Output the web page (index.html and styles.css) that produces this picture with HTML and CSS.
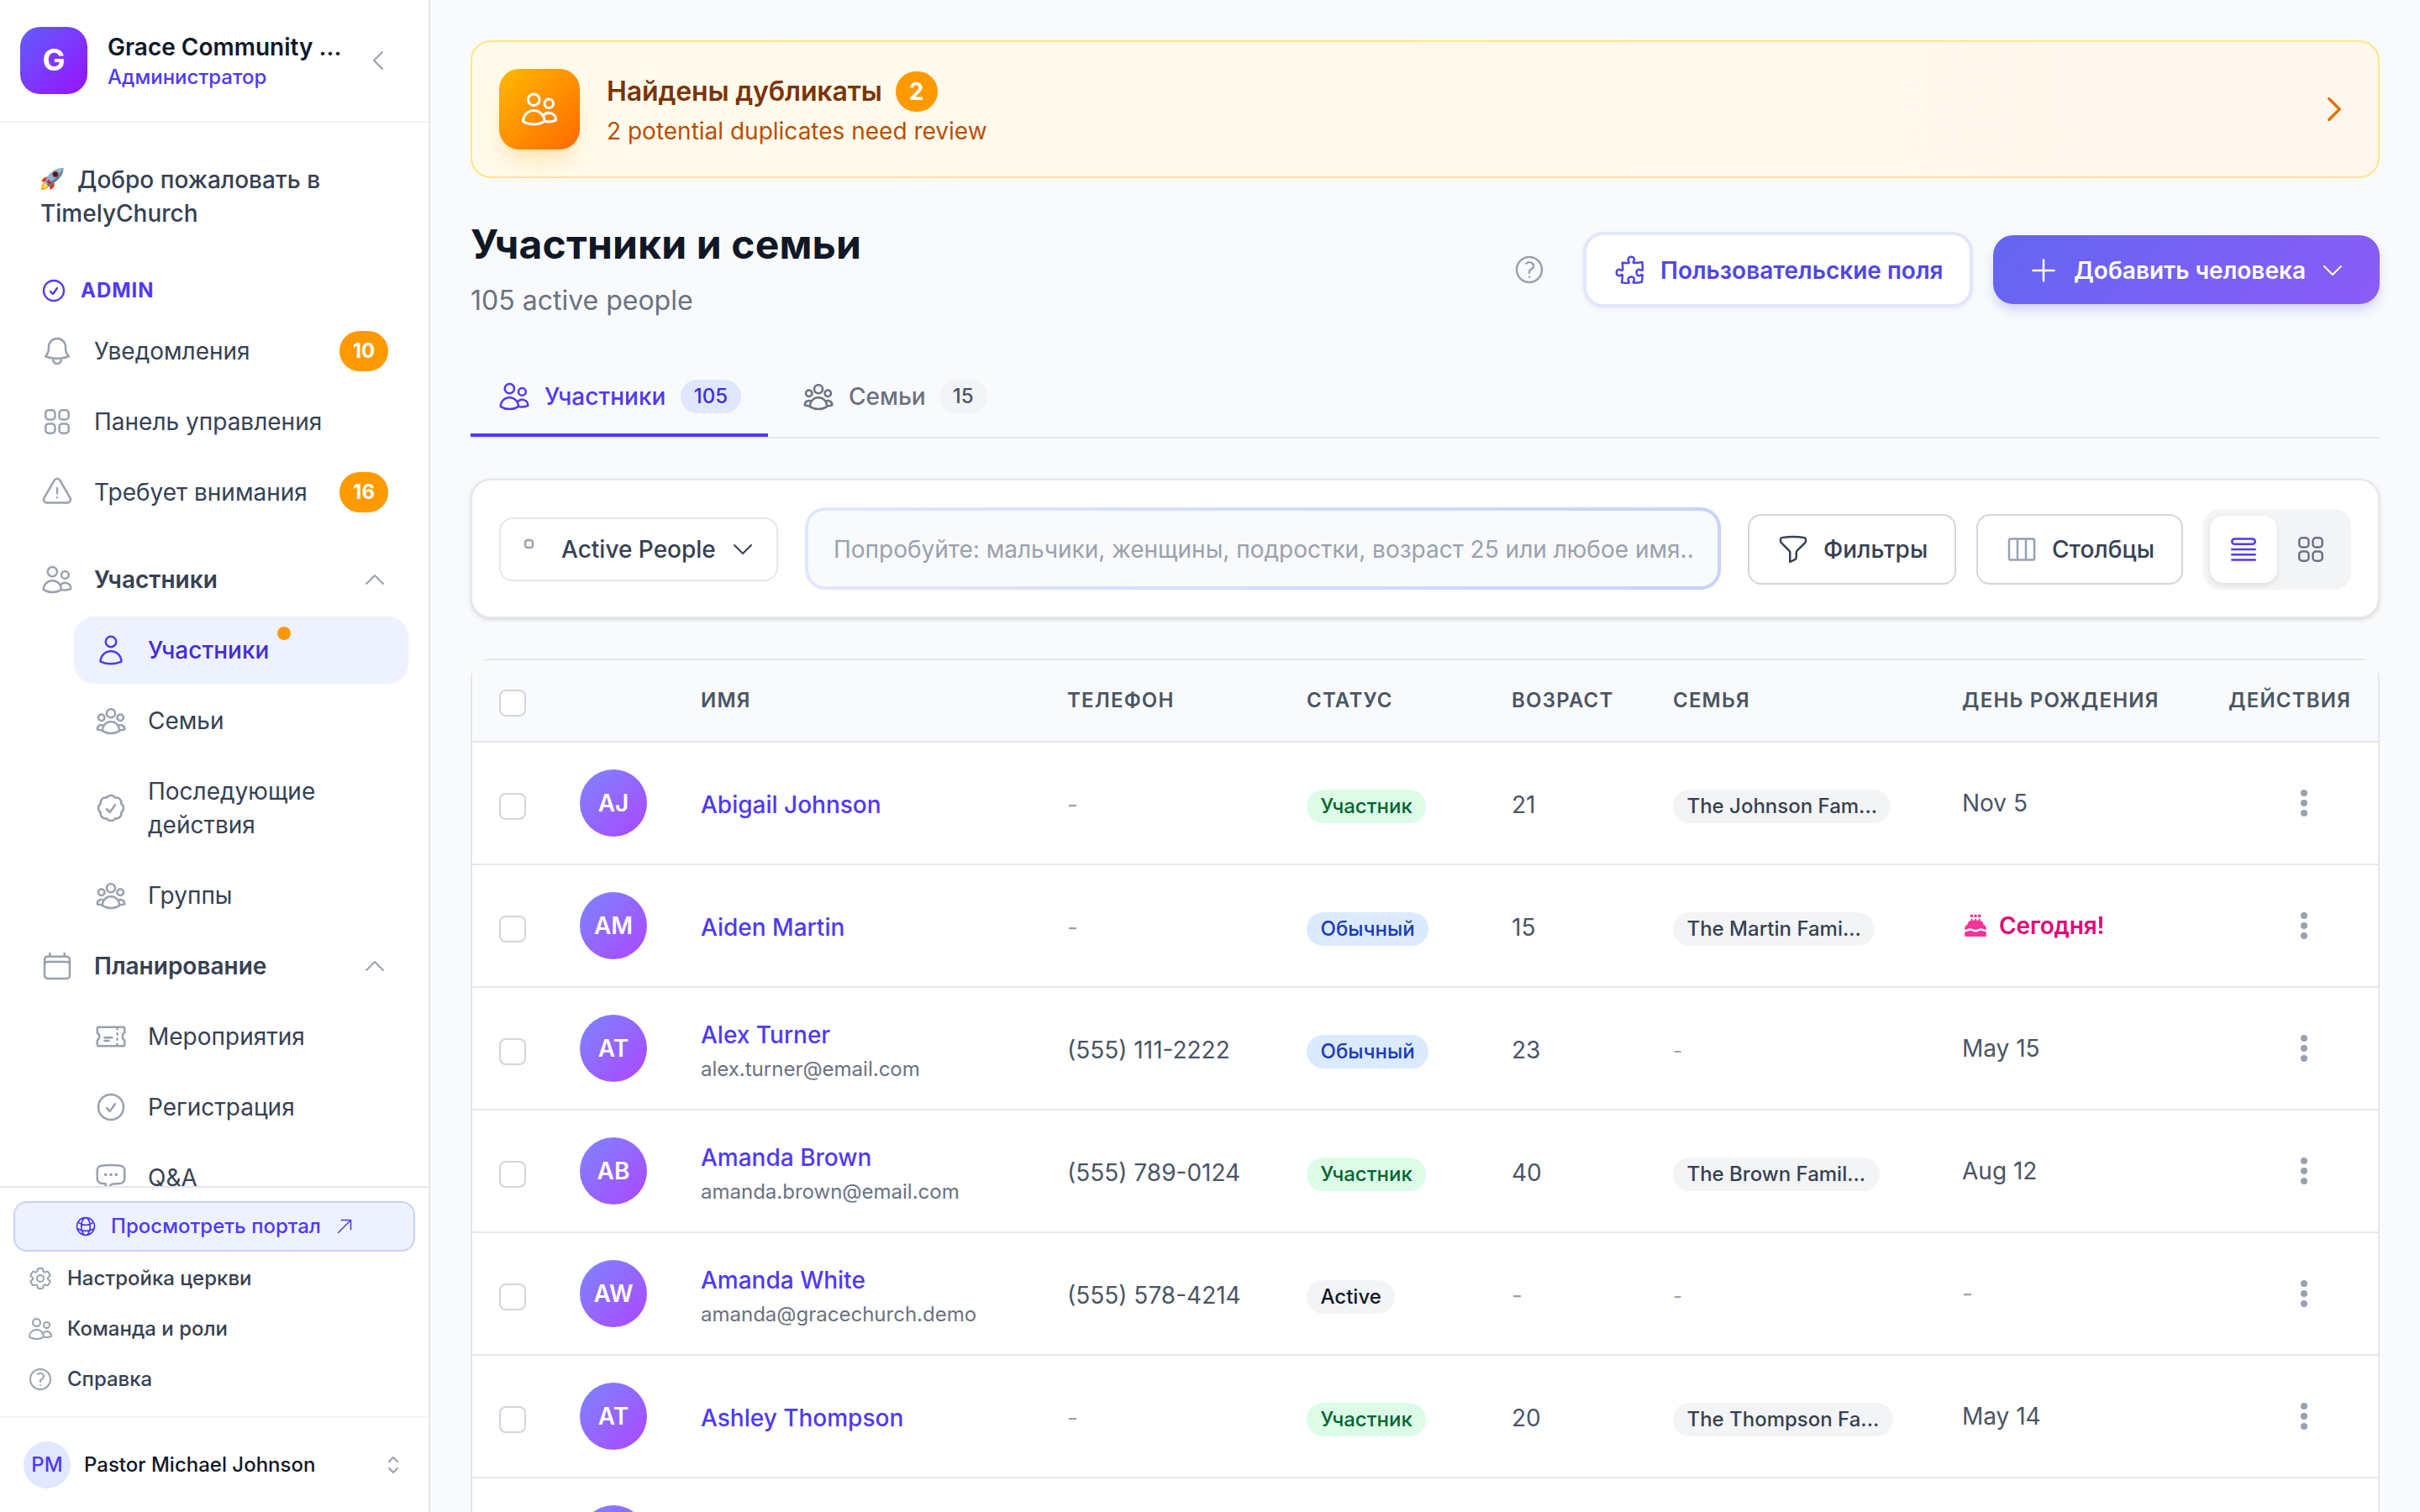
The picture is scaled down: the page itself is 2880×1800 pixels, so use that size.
FILE: index.html
```html
<!DOCTYPE html>
<html lang="ru">
<head>
    <meta charset="UTF-8">
    <meta name="viewport" content="width=device-width, initial-scale=1.0">
    <title>Участники и семьи</title>
    <link rel="stylesheet" href="styles.css">
</head>
<body>

<!-- Иконки -->
<svg class="sprite" xmlns="http://www.w3.org/2000/svg">
    <symbol id="users" viewBox="0 0 24 24"><path d="M15 19.128a9.38 9.38 0 0 0 2.625.372 9.337 9.337 0 0 0 4.121-.952 4.125 4.125 0 0 0-7.533-2.493M15 19.128v-.003c0-1.113-.285-2.16-.786-3.07M15 19.128v.106A12.318 12.318 0 0 1 8.624 21c-2.331 0-4.512-.645-6.374-1.766l-.001-.109a6.375 6.375 0 0 1 11.964-3.07M12 6.375a3.375 3.375 0 1 1-6.75 0 3.375 3.375 0 0 1 6.75 0Zm8.25 2.25a2.625 2.625 0 1 1-5.25 0 2.625 2.625 0 0 1 5.25 0Z"/></symbol>
    <symbol id="group" viewBox="0 0 24 24"><path d="M18 18.72a9.094 9.094 0 0 0 3.741-.479 3 3 0 0 0-4.682-2.72m.94 3.198.001.031c0 .225-.012.447-.037.666A11.944 11.944 0 0 1 12 21c-2.17 0-4.207-.576-5.963-1.584A6.062 6.062 0 0 1 6 18.719m12 0a5.971 5.971 0 0 0-.941-3.197m0 0A5.995 5.995 0 0 0 12 12.75a5.995 5.995 0 0 0-5.058 2.772m0 0a3 3 0 0 0-4.681 2.72 8.986 8.986 0 0 0 3.74.477m.94-3.197a5.971 5.971 0 0 0-.94 3.197M15 6.75a3 3 0 1 1-6 0 3 3 0 0 1 6 0Zm6 3a2.25 2.25 0 1 1-4.5 0 2.25 2.25 0 0 1 4.5 0Zm-13.5 0a2.25 2.25 0 1 1-4.5 0 2.25 2.25 0 0 1 4.5 0Z"/></symbol>
    <symbol id="user" viewBox="0 0 24 24"><path d="M15.75 6a3.75 3.75 0 1 1-7.5 0 3.75 3.75 0 0 1 7.5 0ZM4.501 20.118a7.5 7.5 0 0 1 14.998 0A17.933 17.933 0 0 1 12 21.75c-2.676 0-5.216-.584-7.499-1.632Z"/></symbol>
    <symbol id="bell" viewBox="0 0 24 24"><path d="M14.857 17.082a23.848 23.848 0 0 0 5.454-1.31A8.967 8.967 0 0 1 18 9.75V9A6 6 0 0 0 6 9v.75a8.967 8.967 0 0 1-2.312 6.022c1.733.64 3.56 1.085 5.455 1.31m5.714 0a24.255 24.255 0 0 1-5.714 0m5.714 0a3 3 0 1 1-5.714 0"/></symbol>
    <symbol id="squares" viewBox="0 0 24 24"><path d="M3.75 6A2.25 2.25 0 0 1 6 3.75h2.25A2.25 2.25 0 0 1 10.5 6v2.25a2.25 2.25 0 0 1-2.25 2.25H6a2.25 2.25 0 0 1-2.25-2.25V6ZM3.75 15.75A2.25 2.25 0 0 1 6 13.5h2.25a2.25 2.25 0 0 1 2.25 2.25V18a2.25 2.25 0 0 1-2.25 2.25H6A2.25 2.25 0 0 1 3.75 18v-2.25ZM13.5 6a2.25 2.25 0 0 1 2.25-2.25H18A2.25 2.25 0 0 1 20.25 6v2.25A2.25 2.25 0 0 1 18 10.5h-2.25a2.25 2.25 0 0 1-2.25-2.25V6ZM13.5 15.75a2.25 2.25 0 0 1 2.25-2.25H18a2.25 2.25 0 0 1 2.25 2.25V18A2.25 2.25 0 0 1 18 20.25h-2.25A2.25 2.25 0 0 1 13.5 18v-2.25Z"/></symbol>
    <symbol id="square" viewBox="0 0 24 24"><path d="M3.75 6A2.25 2.25 0 0 1 6 3.75h2.25A2.25 2.25 0 0 1 10.5 6v2.25a2.25 2.25 0 0 1-2.25 2.25H6a2.25 2.25 0 0 1-2.25-2.25V6Z"/></symbol>
    <symbol id="warning" viewBox="0 0 24 24"><path d="M12 9v3.75m-9.303 3.376c-.866 1.5.217 3.374 1.948 3.374h14.71c1.73 0 2.813-1.874 1.948-3.374L13.949 3.378c-.866-1.5-3.032-1.5-3.898 0L2.697 16.126ZM12 15.75h.007v.008H12v-.008Z"/></symbol>
    <symbol id="badge-check" viewBox="0 0 24 24"><path d="M9 12.75 11.25 15 15 9.75M21 12c0 1.268-.63 2.39-1.593 3.068a3.745 3.745 0 0 1-1.043 3.296 3.745 3.745 0 0 1-3.296 1.043A3.745 3.745 0 0 1 12 21c-1.268 0-2.39-.63-3.068-1.593a3.746 3.746 0 0 1-3.296-1.043 3.745 3.745 0 0 1-1.043-3.296A3.745 3.745 0 0 1 3 12c0-1.268.63-2.39 1.593-3.068a3.745 3.745 0 0 1 1.043-3.296 3.746 3.746 0 0 1 3.296-1.043A3.746 3.746 0 0 1 12 3c1.268 0 2.39.63 3.068 1.593a3.746 3.746 0 0 1 3.296 1.043 3.746 3.746 0 0 1 1.043 3.296A3.745 3.745 0 0 1 21 12Z"/></symbol>
    <symbol id="calendar" viewBox="0 0 24 24"><path d="M6.75 3v2.25M17.25 3v2.25M3 18.75V7.5a2.25 2.25 0 0 1 2.25-2.25h13.5A2.25 2.25 0 0 1 21 7.5v11.25m-18 0A2.25 2.25 0 0 0 5.25 21h13.5A2.25 2.25 0 0 0 21 18.75m-18 0v-7.5A2.25 2.25 0 0 1 5.25 9h13.5A2.25 2.25 0 0 1 21 11.25v7.5"/></symbol>
    <symbol id="ticket" viewBox="0 0 24 24"><path d="M16.5 6v.75m0 3v.75m0 3v.75m0 3V18m-9-5.25h5.25M7.5 15h3M3.375 5.25c-.621 0-1.125.504-1.125 1.125v3.026a2.999 2.999 0 0 1 0 5.198v3.026c0 .621.504 1.125 1.125 1.125h17.25c.621 0 1.125-.504 1.125-1.125v-3.026a2.999 2.999 0 0 1 0-5.198V6.375c0-.621-.504-1.125-1.125-1.125H3.375Z"/></symbol>
    <symbol id="check" viewBox="0 0 24 24"><path d="M9 12.75 11.25 15 15 9.75M21 12a9 9 0 1 1-18 0 9 9 0 0 1 18 0Z"/></symbol>
    <symbol id="chat" viewBox="0 0 24 24"><path d="M8.625 9.75a.375.375 0 1 1-.75 0 .375.375 0 0 1 .75 0Zm0 0H8.25m4.125 0a.375.375 0 1 1-.75 0 .375.375 0 0 1 .75 0Zm0 0H12m4.125 0a.375.375 0 1 1-.75 0 .375.375 0 0 1 .75 0Zm0 0h-.375m-13.5 3.01c0 1.6 1.123 2.994 2.707 3.227 1.087.16 2.185.283 3.293.369V21l4.184-4.183a1.14 1.14 0 0 1 .778-.332 48.294 48.294 0 0 0 5.83-.498c1.585-.233 2.708-1.626 2.708-3.228V6.741c0-1.602-1.123-2.995-2.707-3.228A48.394 48.394 0 0 0 12 3c-2.392 0-4.744.175-7.043.513C3.373 3.746 2.25 5.14 2.25 6.741v6.018Z"/></symbol>
    <symbol id="globe" viewBox="0 0 24 24"><path d="M12 21a9.004 9.004 0 0 0 8.716-6.747M12 21a9.004 9.004 0 0 1-8.716-6.747M12 21c2.485 0 4.5-4.03 4.5-9S14.485 3 12 3m0 18c-2.485 0-4.5-4.03-4.5-9S9.515 3 12 3m0 0a8.997 8.997 0 0 1 7.843 4.582M12 3a8.997 8.997 0 0 0-7.843 4.582m15.686 0A11.953 11.953 0 0 1 12 10.5c-2.998 0-5.74-1.1-7.843-2.918m15.686 0A8.959 8.959 0 0 1 21 12c0 .778-.099 1.533-.284 2.253m0 0A17.919 17.919 0 0 1 12 16.5c-3.162 0-6.133-.815-8.716-2.247m0 0A9.015 9.015 0 0 1 3 12c0-1.605.42-3.113 1.157-4.418"/></symbol>
    <symbol id="arrow-out" viewBox="0 0 24 24"><path d="m4.5 19.5 15-15m0 0H8.25m11.25 0v11.25"/></symbol>
    <symbol id="cog" viewBox="0 0 24 24"><path d="M9.594 3.94c.09-.542.56-.94 1.11-.94h2.593c.55 0 1.02.398 1.11.94l.213 1.281c.063.374.313.686.645.87.074.04.147.083.22.127.325.196.72.257 1.075.124l1.217-.456a1.125 1.125 0 0 1 1.37.49l1.296 2.247a1.125 1.125 0 0 1-.26 1.431l-1.003.827c-.293.241-.438.613-.43.992a7.723 7.723 0 0 1 0 .255c-.008.378.137.75.43.991l1.004.827c.424.35.534.955.26 1.43l-1.298 2.247a1.125 1.125 0 0 1-1.369.491l-1.217-.456c-.355-.133-.75-.072-1.076.124a6.47 6.47 0 0 1-.22.128c-.331.183-.581.495-.644.869l-.213 1.281c-.09.543-.56.94-1.11.94h-2.594c-.55 0-1.019-.398-1.11-.94l-.213-1.281c-.062-.374-.312-.686-.644-.87a6.52 6.52 0 0 1-.22-.127c-.325-.196-.72-.257-1.076-.124l-1.217.456a1.125 1.125 0 0 1-1.369-.49l-1.297-2.247a1.125 1.125 0 0 1 .26-1.431l1.004-.827c.292-.24.437-.613.43-.991a6.932 6.932 0 0 1 0-.255c.007-.38-.138-.751-.43-.992l-1.004-.827a1.125 1.125 0 0 1-.26-1.43l1.297-2.247a1.125 1.125 0 0 1 1.37-.491l1.216.456c.356.133.751.072 1.076-.124.072-.044.146-.086.22-.128.332-.183.582-.495.644-.869l.214-1.28ZM15 12a3 3 0 1 1-6 0 3 3 0 0 1 6 0Z"/></symbol>
    <symbol id="question" viewBox="0 0 24 24"><path d="M9.879 7.519c1.171-1.025 3.071-1.025 4.242 0 1.172 1.025 1.172 2.687 0 3.712-.203.179-.43.326-.67.442-.745.361-1.45.999-1.45 1.827v.75M21 12a9 9 0 1 1-18 0 9 9 0 0 1 18 0Zm-9 5.25h.008v.008H12v-.008Z"/></symbol>
    <symbol id="up-down" viewBox="0 0 24 24"><path d="M8.25 15 12 18.75 15.75 15m-7.5-6L12 5.25 15.75 9"/></symbol>
    <symbol id="left" viewBox="0 0 24 24"><path d="M15.75 19.5 8.25 12l7.5-7.5"/></symbol>
    <symbol id="right" viewBox="0 0 24 24"><path d="m8.25 4.5 7.5 7.5-7.5 7.5"/></symbol>
    <symbol id="up" viewBox="0 0 24 24"><path d="m4.5 15.75 7.5-7.5 7.5 7.5"/></symbol>
    <symbol id="down" viewBox="0 0 24 24"><path d="m19.5 8.25-7.5 7.5-7.5-7.5"/></symbol>
    <symbol id="plus" viewBox="0 0 24 24"><path d="M12 4.5v15m7.5-7.5h-15"/></symbol>
    <symbol id="funnel" viewBox="0 0 24 24"><path d="M12 3c2.755 0 5.455.232 8.083.678.533.09.917.556.917 1.096v1.044a2.25 2.25 0 0 1-.659 1.591l-5.432 5.432a2.25 2.25 0 0 0-.659 1.591v2.927a2.25 2.25 0 0 1-1.244 2.013L9.75 21v-6.568a2.25 2.25 0 0 0-.659-1.591L3.659 7.409A2.25 2.25 0 0 1 3 5.818V4.774c0-.54.384-1.006.917-1.096A48.32 48.32 0 0 1 12 3Z"/></symbol>
    <symbol id="columns" viewBox="0 0 24 24"><path d="M9 4.5v15m6-15v15m-10.875 0h15.75c.621 0 1.125-.504 1.125-1.125V5.625c0-.621-.504-1.125-1.125-1.125H4.125C3.504 4.5 3 5.004 3 5.625v12.75c0 .621.504 1.125 1.125 1.125Z"/></symbol>
    <symbol id="list" viewBox="0 0 24 24"><path d="M3.75 12h16.5m-16.5 3.75h16.5M3.75 19.5h16.5M5.625 4.5h12.75a1.875 1.875 0 0 1 0 3.75H5.625a1.875 1.875 0 0 1 0-3.75Z"/></symbol>
    <symbol id="puzzle" viewBox="0 0 24 24"><path d="M14.25 6.087c0-.355.186-.676.401-.959.221-.29.349-.634.349-1.003 0-1.036-1.007-1.875-2.25-1.875s-2.25.84-2.25 1.875c0 .369.128.713.349 1.003.215.283.401.604.401.959v0a.64.64 0 0 1-.657.643 48.39 48.39 0 0 1-4.163-.3c.186 1.613.293 3.25.315 4.907a.656.656 0 0 1-.658.663v0c-.355 0-.676-.186-.959-.401a1.647 1.647 0 0 0-1.003-.349c-1.036 0-1.875 1.007-1.875 2.25s.84 2.25 1.875 2.25c.369 0 .713-.128 1.003-.349.283-.215.604-.401.959-.401v0c.31 0 .555.26.532.57a48.039 48.039 0 0 1-.642 5.056c1.518.19 3.058.309 4.616.354a.64.64 0 0 0 .657-.643v0c0-.355-.186-.676-.401-.959a1.647 1.647 0 0 1-.349-1.003c0-1.035 1.008-1.875 2.25-1.875 1.243 0 2.25.84 2.25 1.875 0 .369-.128.713-.349 1.003-.215.283-.4.604-.4.959v0c0 .333.277.599.61.58a48.1 48.1 0 0 0 5.427-.63 48.05 48.05 0 0 0 .582-4.717.532.532 0 0 0-.533-.57v0c-.355 0-.676.186-.959.401-.29.221-.634.349-1.003.349-1.035 0-1.875-1.007-1.875-2.25s.84-2.25 1.875-2.25c.37 0 .713.128 1.003.349.283.215.604.401.96.401v0a.656.656 0 0 0 .658-.663 48.422 48.422 0 0 0-.37-5.36c-1.886.342-3.81.574-5.766.689a.578.578 0 0 1-.61-.58v0Z"/></symbol>
    <symbol id="dots" viewBox="0 0 20 20"><circle cx="10" cy="4" r="2"/><circle cx="10" cy="10" r="2"/><circle cx="10" cy="16" r="2"/></symbol>
    <symbol id="cake" viewBox="0 0 20 20">
        <circle cx="7.1" cy="2.7" r="1.15"/><circle cx="10" cy="2.7" r="1.15"/><circle cx="12.9" cy="2.7" r="1.15"/>
        <path d="M6.5 5h1.3v1.1h1.5V5h1.4v1.1h1.5V5h1.3v1.2c1.5.3 2.3 1.4 2.3 2.6v.2c1.3.4 2.2 1.6 2.2 3v1c-.7 0-1.200-.1-1.700-.4a5.200 5.200 0 0 0-4.600 0 3.700 3.700 0 0 1-3.400 0 5.200 5.200 0 0 0-4.600 0c-.5.3-1 .4-1.700.4v-1c0-1.400.9-2.600 2.200-3v-.2c0-1.200.8-2.300 2.300-2.600z"/>
        <path d="M2 14.600c.8 0 1.600-.2 2.300-.5a3.700 3.700 0 0 1 3.400 0 5.200 5.200 0 0 0 4.600 0 3.700 3.700 0 0 1 3.400 0c.7.3 1.500.5 2.300.5v2.700a.8.8 0 0 1-.8.8H2.800a.8.8 0 0 1-.8-.8z"/>
    </symbol>
    <symbol id="rocket" viewBox="0 0 28 28">
        <path fill="#e0321f" d="M9 11 4 13 1 17l7 1zM17 19l-1 5-4 3-2-7z"/>
        <path fill="#fba81c" d="M6 17c-3 1-5 4-5 10 5 0 8-2 10-5z"/>
        <path fill="#ffe36b" d="M6 19c-2 1-3 3-3 6 3 0 5-1 6-3z"/>
        <path fill="#8fb4cc" d="M27.500.8C20 .8 13 4.500 8 12l-3 6 5 5 6-4c8-5 11.500-11 11.500-18.200z"/>
        <path fill="#5b7f9b" d="M27.500.8C27 8 23 14 15 19.500L10 23l-2.500-2.500C16 16 23 10 27.500.8z"/>
        <path fill="#c4262e" d="M9.500 14.500l4 4-3 2-3-3z"/>
        <circle cx="18" cy="8.500" r="3.600" fill="#b3202a"/><circle cx="18" cy="8.500" r="2.400" fill="#1b2430"/>
    </symbol>
</svg>

<div class="app">
    <aside class="sidebar">
        <div class="brand">
            <div class="logo">G</div>
            <div class="brand-text">
                <div class="brand-name">Grace Community ...</div>
                <div class="brand-role">Администратор</div>
            </div>
            <svg class="icon icon-sm"><use href="#left"/></svg>
        </div>

        <nav class="nav">
            <div class="welcome"><svg class="rocket"><use href="#rocket"/></svg>Добро пожаловать в<br>TimelyChurch</div>
            <div class="nav-title"><svg class="icon icon-sm"><use href="#check"/></svg>ADMIN</div>
            <a class="nav-item"><svg class="icon"><use href="#bell"/></svg><span>Уведомления</span><b class="count">10</b></a>
            <a class="nav-item"><svg class="icon"><use href="#squares"/></svg><span>Панель управления</span></a>
            <a class="nav-item"><svg class="icon"><use href="#warning"/></svg><span>Требует внимания</span><b class="count">16</b></a>

            <a class="nav-item section first"><svg class="icon"><use href="#users"/></svg><span>Участники</span><svg class="icon icon-sm"><use href="#up"/></svg></a>
            <a class="nav-item sub active"><svg class="icon"><use href="#user"/></svg><span>Участники<i class="dot"></i></span></a>
            <a class="nav-item sub"><svg class="icon"><use href="#group"/></svg><span>Семьи</span></a>
            <a class="nav-item sub"><svg class="icon"><use href="#badge-check"/></svg><span>Последующие действия</span></a>
            <a class="nav-item sub"><svg class="icon"><use href="#group"/></svg><span>Группы</span></a>

            <a class="nav-item section"><svg class="icon"><use href="#calendar"/></svg><span>Планирование</span><svg class="icon icon-sm"><use href="#up"/></svg></a>
            <a class="nav-item sub"><svg class="icon"><use href="#ticket"/></svg><span>Мероприятия</span></a>
            <a class="nav-item sub"><svg class="icon"><use href="#check"/></svg><span>Регистрация</span></a>
            <a class="nav-item sub"><svg class="icon"><use href="#chat"/></svg><span>Q&amp;A</span></a>
        </nav>

        <div class="side-bottom">
            <a class="portal"><svg class="icon icon-globe"><use href="#globe"/></svg>Просмотреть портал<svg class="icon icon-xs"><use href="#arrow-out"/></svg></a>
            <a class="side-link"><svg class="icon icon-sm"><use href="#cog"/></svg>Настройка церкви</a>
            <a class="side-link"><svg class="icon icon-sm"><use href="#users"/></svg>Команда и роли</a>
            <a class="side-link"><svg class="icon icon-sm"><use href="#question"/></svg>Справка</a>
        </div>

        <div class="profile">
            <div class="profile-avatar">PM</div>
            <div class="profile-name">Pastor Michael Johnson</div>
            <svg class="icon icon-sm"><use href="#up-down"/></svg>
        </div>
    </aside>

    <main class="main">
        <div class="banner">
            <div class="banner-icon"><svg class="icon icon-lg"><use href="#users"/></svg></div>
            <div class="banner-text">
                <div class="banner-title">Найдены дубликаты <b class="count">2</b></div>
                <div class="banner-sub">2 potential duplicates need review</div>
            </div>
            <svg class="icon icon-bold"><use href="#right"/></svg>
        </div>

        <header class="page-head">
            <div class="page-titles">
                <h1>Участники и семьи</h1>
                <p>105 active people</p>
            </div>
            <svg class="icon help"><use href="#question"/></svg>
            <button class="btn-fields"><svg class="icon"><use href="#puzzle"/></svg>Пользовательские поля</button>
            <button class="btn-add"><svg class="icon"><use href="#plus"/></svg>Добавить человека<svg class="icon icon-sm"><use href="#down"/></svg></button>
        </header>

        <div class="tabs">
            <a class="tab current"><svg class="icon"><use href="#users"/></svg>Участники<span class="tab-count">105</span></a>
            <a class="tab"><svg class="icon"><use href="#group"/></svg>Семьи<span class="tab-count">15</span></a>
        </div>

        <div class="toolbar">
            <button class="select"><svg class="icon icon-sm muted"><use href="#square"/></svg>Active People<svg class="icon icon-sm"><use href="#down"/></svg></button>
            <div class="search"><div class="search-field">Попробуйте: мальчики, женщины, подростки, возраст 25 или любое имя..</div></div>
            <button class="btn-tool"><svg class="icon"><use href="#funnel"/></svg>Фильтры</button>
            <button class="btn-tool cols"><svg class="icon muted"><use href="#columns"/></svg>Столбцы</button>
            <div class="toggle">
                <span class="toggle-item on"><svg class="icon"><use href="#list"/></svg></span>
                <span class="toggle-item"><svg class="icon"><use href="#squares"/></svg></span>
            </div>
        </div>

        <div class="table-card">
            <table class="people">
                <colgroup>
                    <col class="c-check"><col class="c-avatar"><col class="c-name"><col class="c-phone"><col class="c-status">
                    <col class="c-age"><col class="c-family"><col class="c-birth"><col class="c-actions">
                </colgroup>
                <thead>
                    <tr>
                        <th><i class="box"></i></th><th></th><th>ИМЯ</th><th>ТЕЛЕФОН</th><th>СТАТУС</th><th>ВОЗРАСТ</th><th>СЕМЬЯ</th><th>ДЕНЬ РОЖДЕНИЯ</th><th>ДЕЙСТВИЯ</th>
                    </tr>
                </thead>
                <tbody>
                    <tr>
                        <td><i class="box"></i></td>
                        <td><div class="avatar">AJ</div></td>
                        <td><div class="name">Abigail Johnson</div></td>
                        <td><span class="none">-</span></td>
                        <td><span class="pill green">Участник</span></td>
                        <td>21</td>
                        <td><span class="pill">The Johnson Fam...</span></td>
                        <td><div class="birth">Nov 5</div></td>
                        <td><svg class="more"><use href="#dots"/></svg></td>
                    </tr>
                    <tr>
                        <td><i class="box"></i></td>
                        <td><div class="avatar">AM</div></td>
                        <td><div class="name">Aiden Martin</div></td>
                        <td><span class="none">-</span></td>
                        <td><span class="pill blue">Обычный</span></td>
                        <td>15</td>
                        <td><span class="pill">The Martin Fami...</span></td>
                        <td><div class="birth today"><svg class="cake"><use href="#cake"/></svg>Сегодня!</div></td>
                        <td><svg class="more"><use href="#dots"/></svg></td>
                    </tr>
                    <tr>
                        <td><i class="box"></i></td>
                        <td><div class="avatar">AT</div></td>
                        <td><div class="name">Alex Turner</div><div class="email">alex.turner@email.com</div></td>
                        <td>(555) 111-2222</td>
                        <td><span class="pill blue">Обычный</span></td>
                        <td>23</td>
                        <td><span class="none small">-</span></td>
                        <td><div class="birth">May 15</div></td>
                        <td><svg class="more"><use href="#dots"/></svg></td>
                    </tr>
                    <tr>
                        <td><i class="box"></i></td>
                        <td><div class="avatar">AB</div></td>
                        <td><div class="name">Amanda Brown</div><div class="email">amanda.brown@email.com</div></td>
                        <td>(555) 789-0124</td>
                        <td><span class="pill green">Участник</span></td>
                        <td>40</td>
                        <td><span class="pill">The Brown Famil...</span></td>
                        <td><div class="birth">Aug 12</div></td>
                        <td><svg class="more"><use href="#dots"/></svg></td>
                    </tr>
                    <tr>
                        <td><i class="box"></i></td>
                        <td><div class="avatar">AW</div></td>
                        <td><div class="name">Amanda White</div><div class="email">amanda@gracechurch.demo</div></td>
                        <td>(555) 578-4214</td>
                        <td><span class="pill dark">Active</span></td>
                        <td><span class="none">-</span></td>
                        <td><span class="none small">-</span></td>
                        <td><div class="birth none">-</div></td>
                        <td><svg class="more"><use href="#dots"/></svg></td>
                    </tr>
                    <tr>
                        <td><i class="box"></i></td>
                        <td><div class="avatar">AT</div></td>
                        <td><div class="name">Ashley Thompson</div></td>
                        <td><span class="none">-</span></td>
                        <td><span class="pill green">Участник</span></td>
                        <td>20</td>
                        <td><span class="pill">The Thompson Fa...</span></td>
                        <td><div class="birth">May 14</div></td>
                        <td><svg class="more"><use href="#dots"/></svg></td>
                    </tr>
                    <tr>
                        <td></td>
                        <td><div class="avatar"></div></td>
                        <td></td><td></td><td></td><td></td><td></td><td></td><td></td>
                    </tr>
                </tbody>
            </table>
        </div>
    </main>
</div>

</body>
</html>
```
FILE: styles.css
```css
* {
    box-sizing: border-box;
}
body {
    margin: 0;
    height: 1800px;
    overflow: hidden;
    font-family: Inter, "Liberation Sans", sans-serif;
    font-size: 28px;
    line-height: 40px;
    color: #364153;
    background: #f9fafb;
}
button {
    font: inherit;
    cursor: pointer;
}
.sprite {
    display: none;
}
.icon {
    width: 40px;
    height: 40px;
    flex: none;
    fill: none;
    stroke: currentColor;
    stroke-width: 1.5;
    stroke-linecap: round;
    stroke-linejoin: round;
}
.icon-lg {
    width: 48px;
    height: 48px;
}
.icon-sm {
    width: 32px;
    height: 32px;
}
.icon-globe {
    width: 28px;
    height: 28px;
}
.icon-xs {
    width: 24px;
    height: 24px;
}
.icon-bold {
    stroke-width: 2;
}
.muted {
    color: #99a1af;
}
.app {
    display: flex;
    height: 1800px;
    overflow: hidden;
}

/* Sidebar */
.sidebar {
    width: 512px;
    flex: none;
    display: flex;
    flex-direction: column;
    background: #fff;
    border-right: 2px solid #e5e7eb;
}
.brand {
    display: flex;
    align-items: center;
    height: 146px;
    padding: 0 44px 0 24px;
    border-bottom: 2px solid #f3f4f6;
    color: #99a1af;
}
.logo {
    width: 80px;
    height: 80px;
    margin-right: 24px;
    border-radius: 24px;
    background: linear-gradient(135deg, #615fff, #9810fa);
    color: #fff;
    font-size: 36px;
    font-weight: 700;
    line-height: 78px;
    text-align: center;
}
.brand-text {
    flex: 1;
}
.brand-name {
    color: #101828;
    font-weight: 600;
    white-space: nowrap;
}
.brand-role {
    color: #4f39f6;
    font-size: 24px;
    font-weight: 500;
    line-height: 32px;
}
.nav {
    flex: 1;
    min-height: 0;
    overflow: hidden;
    padding: 24px;
}
.welcome {
    padding: 24px;
    font-weight: 500;
    white-space: nowrap;
}
.rocket {
    width: 28px;
    height: 28px;
    margin-right: 16px;
    vertical-align: -3px;
}
.nav-title {
    display: flex;
    align-items: center;
    gap: 16px;
    height: 48px;
    margin: 24px 0 8px;
    padding: 0 24px;
    color: #4f39f6;
    font-size: 24px;
    font-weight: 700;
    letter-spacing: 1px;
}
.nav-title .icon {
    stroke-width: 1.8;
}
.nav-item {
    display: flex;
    align-items: center;
    gap: 24px;
    margin-bottom: 4px;
    padding: 20px 24px;
}
.nav-item .icon {
    color: #99a1af;
}
.nav-item span {
    flex: 1;
}
.nav-item .count {
    width: 58px;
    margin: -4px 0;
}
.nav-item.section {
    font-weight: 600;
}
.nav-item.first {
    margin-top: 24px;
}
.nav-item.sub {
    margin-left: 64px;
}
.nav-item.active {
    border-radius: 24px;
    background: #eef2ff;
    color: #432dd7;
    font-weight: 500;
}
.nav-item.active .icon {
    color: #4f39f6;
}
.nav-item.active span {
    position: relative;
    flex: none;
}
.dot {
    position: absolute;
    top: -8px;
    right: -26px;
    width: 16px;
    height: 16px;
    border-radius: 50%;
    background: #fe9a00;
}
.count {
    width: 50px;
    height: 48px;
    border-radius: 24px;
    background: #fe9a00;
    color: #fff;
    font-size: 24px;
    font-weight: 700;
    line-height: 48px;
    text-align: center;
}
.side-bottom {
    padding: 16px 16px 12px;
    border-top: 2px solid #e5e7eb;
    font-size: 24px;
    font-weight: 500;
}
.portal {
    display: flex;
    align-items: center;
    justify-content: center;
    gap: 16px;
    height: 60px;
    margin-bottom: 4px;
    border: 2px solid #c6d2ff;
    border-radius: 16px;
    background: #eef2ff;
    color: #4f39f6;
}
.side-link {
    display: flex;
    align-items: center;
    gap: 16px;
    height: 56px;
    margin-bottom: 4px;
    padding: 0 16px;
}
.side-link .icon {
    color: #99a1af;
}
.profile {
    display: flex;
    align-items: center;
    gap: 16px;
    height: 114px;
    padding: 0 26px 0 28px;
    border-top: 2px solid #f3f4f6;
    color: #99a1af;
    font-size: 24px;
    font-weight: 500;
}
.profile-avatar {
    width: 56px;
    height: 56px;
    border-radius: 50%;
    background: #e0e7ff;
    color: #4f39f6;
    line-height: 56px;
    text-align: center;
}
.profile-name {
    flex: 1;
    color: #101828;
}

/* Main */
.main {
    flex: 1;
    padding: 48px;
}
.banner {
    display: flex;
    align-items: center;
    gap: 32px;
    height: 164px;
    padding: 0 32px;
    border: 2px solid #fee685;
    border-radius: 24px;
    background: linear-gradient(90deg, #fffbeb, #fff7ed);
    color: #e17100;
}
.banner-icon {
    display: flex;
    align-items: center;
    justify-content: center;
    width: 96px;
    height: 96px;
    border-radius: 24px;
    background: linear-gradient(135deg, #ffb900, #ff6900);
    box-shadow: 0 20px 30px -6px rgba(254, 154, 0, .2), 0 8px 12px -8px rgba(254, 154, 0, .2);
    color: #fff;
}
.banner-text {
    flex: 1;
}
.banner-title {
    display: flex;
    align-items: center;
    gap: 16px;
    color: #7b3306;
    font-size: 32px;
    font-weight: 600;
    line-height: 49px;
    letter-spacing: -.14px;
}
.banner-title .count {
    font-size: 28px;
}
.banner-sub {
    margin-top: 3px;
    color: #bb4d00;
}
.page-head {
    display: flex;
    align-items: center;
    margin-top: 48px;
    height: 122px;
}
.page-titles {
    flex: 1;
}
h1 {
    margin: 0;
    color: #101828;
    font-size: 48px;
    font-weight: 700;
    line-height: 60px;
    letter-spacing: .15px;
}
.page-titles p {
    margin: 13px 0 0;
    color: #6a7282;
    font-size: 32px;
    line-height: 48px;
}
.help {
    margin-right: 44px;
    color: #99a1af;
}
.btn-fields,
.btn-add {
    display: flex;
    align-items: center;
    gap: 16px;
    border: 0;
    border-radius: 24px;
    font-weight: 600;
}
.btn-fields {
    width: 464px;
    height: 90px;
    margin-right: 24px;
    padding: 1px 30px 0 32px;
    border: 4px solid #e0e7ff;
    background: #fff;
    color: #4f46e5;
    box-shadow: 0 2px 6px rgba(0, 0, 0, .05);
}
.btn-add {
    width: 460px;
    height: 82px;
    padding: 1px 40px 0;
    background: linear-gradient(135deg, #6366f1, #8b5cf6);
    color: #fff;
    box-shadow: 0 8px 14px -2px rgba(99, 102, 241, .3);
}
.tabs {
    display: flex;
    gap: 8px;
    height: 96px;
    margin-top: 44px;
    border-bottom: 2px solid #e5e7eb;
    color: #6a7282;
    font-weight: 500;
}
.tab {
    display: flex;
    align-items: center;
    gap: 16px;
    padding: 2px 32px 0;
    border-bottom: 4px solid transparent;
}
.tab.current {
    width: 354px;
    border-color: #4f39f6;
    color: #4f39f6;
}
.tab-count {
    padding: 0 16px;
    border-radius: 20px;
    background: #f3f4f6;
    color: #4a5565;
    font-size: 24px;
}
.current .tab-count {
    margin-left: auto;
    background: #e0e7ff;
    color: #432dd7;
}
.toolbar {
    display: flex;
    align-items: center;
    height: 166px;
    margin-top: 48px;
    padding: 0 32px;
    border: 2px solid #e5e7eb;
    border-radius: 24px;
    background: #fff;
    box-shadow: 0 2px 6px rgba(0, 0, 0, .1), 0 2px 4px -2px rgba(0, 0, 0, .1);
}
.select,
.btn-tool {
    display: flex;
    align-items: center;
    border-radius: 16px;
    background: #fff;
    color: #364153;
    font-weight: 500;
}
.select {
    gap: 16px;
    width: 332px;
    height: 76px;
    margin-top: 2px;
    padding: 0 24px;
    border: 2px solid #e5e7eb;
    white-space: nowrap;
}
.select .muted {
    stroke-width: 1.8;
}
.search {
    width: 1090px;
    height: 98px;
    margin: 0 32px;
    padding: 4px;
    border-radius: 24px;
    background: linear-gradient(90deg, #e0e7ff, #c7d2fe);
}
.search-field {
    height: 90px;
    padding: 0 30px;
    border-radius: 20px;
    background: #f9fafb;
    color: #99a1af;
    line-height: 92px;
    white-space: nowrap;
}
.btn-tool {
    gap: 16px;
    width: 248px;
    height: 84px;
    margin-top: 2px;
    padding: 0 32px;
    border: 2px solid #d1d5dc;
}
.btn-tool.cols {
    width: 246px;
    margin: 2px 24px 0;
}
.toggle {
    display: flex;
    margin-top: 2px;
    padding: 8px;
    border-radius: 20px;
    background: #f3f4f6;
    color: #6a7282;
}
.toggle-item {
    display: flex;
    align-items: center;
    justify-content: center;
    width: 80px;
    height: 80px;
    border-radius: 16px;
}
.toggle-item.on {
    background: #fff;
    color: #4f39f6;
    box-shadow: 0 2px 6px rgba(0, 0, 0, .1);
}

/* Table */
.table-card {
    margin-top: 48px;
    border: 2px solid #e5e7eb;
    border-radius: 24px;
    background: #fff;
}
.people {
    width: 2268px;
    table-layout: fixed;
    border-collapse: separate;
    border-spacing: 0;
}
.c-check { width: 96px; }
.c-avatar { width: 144px; }
.c-name { width: 436px; }
.c-phone { width: 285px; }
.c-status { width: 244px; }
.c-age { width: 192px; }
.c-family { width: 344px; }
.c-birth { width: 317px; }
.c-actions { width: 210px; }
.people th,
.people td {
    padding: 0 0 0 32px;
    border-bottom: 2px solid #e5e7eb;
    text-align: left;
    white-space: nowrap;
}
.people th {
    height: 98px;
    background: #f9fafb;
    color: #4a5565;
    font-size: 24px;
    font-weight: 600;
    letter-spacing: 1.2px;
    line-height: 32px;
}
.people td {
    height: 146px;
    color: #4a5565;
    padding-top: 4px;
}
.box {
    display: block;
    width: 32px;
    height: 32px;
    margin-top: 6px;
    border: 2px solid #d1d5dc;
    border-radius: 8px;
    background: #fff;
}
td .box {
    margin-top: 4px;
}
.avatar {
    width: 80px;
    height: 80px;
    margin-top: -4px;
    border-radius: 50%;
    background: linear-gradient(135deg, #7c86ff, #ad46ff);
    color: #fff;
    font-weight: 600;
    line-height: 80px;
    text-align: center;
}
.name {
    color: #4f39f6;
    font-weight: 500;
}
.email {
    color: #6a7282;
    font-size: 24px;
    line-height: 32px;
    margin-top: 5px;
}
.none {
    color: #99a1af;
}
.small {
    font-size: 24px;
}
.pill {
    display: block;
    width: fit-content;
    height: 40px;
    margin-top: 4px;
    padding: 0 16.5px;
    border-radius: 20px;
    background: #f3f4f6;
    color: #364153;
    font-size: 24px;
    font-weight: 500;
}
.pill.dark {
    color: #101828;
}
.pill.green {
    background: #dcfce7;
    color: #016630;
}
.pill.blue {
    background: #dbeafe;
    color: #193cb8;
}
.birth {
    display: flex;
    align-items: center;
    gap: 12px;
    margin-top: -5px;
}
.today {
    color: #e60076;
    font-weight: 600;
    letter-spacing: -.15px;
}
.cake {
    width: 32px;
    height: 32px;
    fill: #f6339a;
}
.more {
    display: block;
    width: 40px;
    height: 40px;
    margin: -4px 0 0 70px;
    fill: #99a1af;
}
```
